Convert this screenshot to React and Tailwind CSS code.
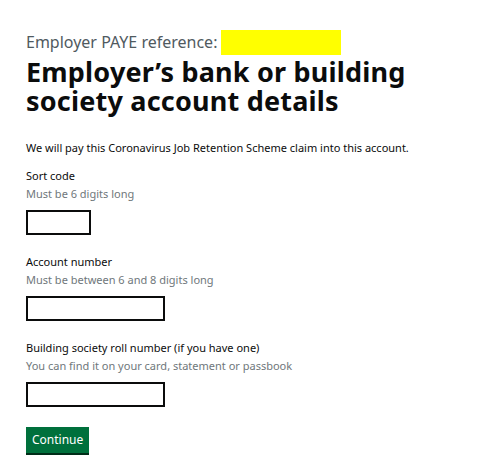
export default function App() {
  return (
    <div className="min-h-screen bg-white text-[#0b0c0c] font-['Noto_Sans',sans-serif]">
      <div className="px-[26px] pt-[30px]">
        <div className="flex items-center gap-[4px] h-[25px]">
          <span className="text-[16px] leading-[25px] text-[#505a5f]">Employer PAYE reference:</span>
          <span className="w-[120px] h-[25px] bg-[#ffff00]" />
        </div>
        <h1 className="mt-[2px] text-[27px] font-bold tracking-[0.2px]">
          <span className="block leading-[29px]">Employer’s bank or building</span>
          <span className="block leading-[29px]">society account details</span>
        </h1>

        <p className="mt-[25px] text-[11px] leading-[16px]">
          We will pay this Coronavirus Job Retention Scheme claim into this account.
        </p>

        <div className="mt-[12px]">
          <label className="block text-[11px] leading-[16px]">Sort code</label>
          <div className="mt-[2px] text-[11px] leading-[16px] text-[#6f777b]">Must be 6 digits long</div>
          <input className="mt-[8px] block w-[65px] h-[25px] border-2 border-[#0b0c0c] outline-none" />
        </div>

        <div className="mt-[19px]">
          <label className="block text-[11px] leading-[16px]">Account number</label>
          <div className="mt-[2px] text-[11px] leading-[16px] text-[#6f777b]">Must be between 6 and 8 digits long</div>
          <input className="mt-[8px] block w-[139px] h-[25px] border-2 border-[#0b0c0c] outline-none" />
        </div>

        <div className="mt-[19px]">
          <label className="block text-[11px] leading-[16px]">Building society roll number (if you have one)</label>
          <div className="mt-[2px] text-[11px] leading-[16px] text-[#6f777b]">You can find it on your card, statement or passbook</div>
          <input className="mt-[8px] block w-[139px] h-[25px] border-2 border-[#0b0c0c] outline-none" />
        </div>

        <button className="mt-[20px] h-[26px] px-[6px] bg-[#00703c] text-white text-[12px] leading-[26px] shadow-[0_2px_0_#002d18]">
          Continue
        </button>
      </div>
    </div>
  );
}
